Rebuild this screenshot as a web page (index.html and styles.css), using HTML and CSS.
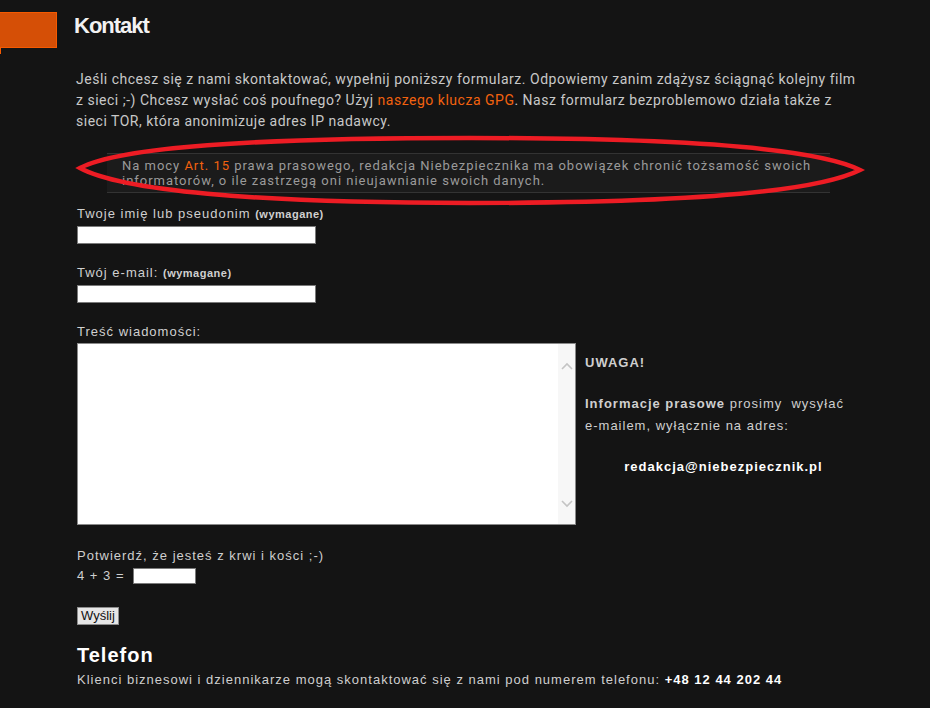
FILE: index.html
```html
<!DOCTYPE html>
<html lang="pl">
<head>
<meta charset="utf-8">
<title>Kontakt</title>
<link rel="stylesheet" href="styles.css">
</head>
<body>
<div class="page">
  <header class="head">
    <div class="tab"><span class="tab-tail"></span></div>
    <h1 class="title">Kontakt</h1>
  </header>

  <div class="content">
    <p class="intro">Jeśli chcesz się z nami skontaktować, wypełnij poniższy formularz. Odpowiemy zanim zdążysz ściągnąć kolejny film z sieci ;-) Chcesz wysłać coś poufnego? Użyj <a href="#" class="link">naszego klucza GPG</a>. Nasz formularz bezproblemowo działa także z sieci TOR, która anonimizuje adres IP nadawcy.</p>

    <div class="callout">Na mocy <a href="#" class="link">Art. 15</a> prawa prasowego, redakcja Niebezpiecznika ma obowiązek chronić tożsamość swoich informatorów, o ile zastrzegą oni nieujawnianie swoich danych.</div>

    <form class="form">
      <label class="label">Twoje imię lub pseudonim <small class="req">(wymagane)</small></label>
      <input class="field" type="text">

      <label class="label gap">Twój e-mail: <small class="req">(wymagane)</small></label>
      <input class="field" type="text">

      <label class="label gap">Treść wiadomości:</label>
      <div class="msg-row">
        <div class="textbox">
          <textarea class="area"></textarea>
          <div class="scroll">
            <svg class="chev" width="12" height="8" viewBox="0 0 12 8"><path d="M1 7 L6 2 L11 7" fill="none" stroke="#c4c4c4" stroke-width="1.6"/></svg>
            <svg class="chev" width="12" height="8" viewBox="0 0 12 8"><path d="M1 1 L6 6 L11 1" fill="none" stroke="#c4c4c4" stroke-width="1.6"/></svg>
          </div>
        </div>
        <aside class="note">
          <p class="note-p"><b>UWAGA!</b></p>
          <p class="note-p"><b>Informacje prasowe</b> prosimy&nbsp; wysyłać e-mailem, wyłącznie na adres:</p>
          <p class="note-p mail">redakcja@niebezpiecznik.pl</p>
        </aside>
      </div>

      <p class="captcha">Potwierdź, że jesteś z krwi i kości ;-)</p>
      <div class="sum"><span>4 + 3 =</span><input class="small-field" type="text"></div>

      <button class="send" type="button">Wyślij</button>
    </form>

    <h2 class="sub">Telefon</h2>
    <p class="phone">Klienci biznesowi i dziennikarze mogą skontaktować się z nami pod numerem telefonu: <b class="num">+48 12 44 202 44</b></p>
  </div>

  <svg class="mark" width="930" height="708" viewBox="0 0 930 708">
    <path d="M80,168 C120,147 250,138 470,138 C700,138 820,150 860,170 C820,190 700,203 470,203 C250,203 120,190 80,168 Z" fill="none" stroke="#ed1c24" stroke-width="4.5"/>
  </svg>
</div>
</body>
</html>
```

FILE: styles.css
```css
html, body {
  margin: 0;
  padding: 0;
  background: #141414;
}

.page {
  position: relative;
  width: 930px;
  height: 708px;
  overflow: hidden;
  font-family: "Liberation Sans", Arial, sans-serif;
  color: #cfcfcf;
}

.head {
  display: flex;
  align-items: flex-start;
  padding-top: 12px;
}

.tab {
  position: relative;
  width: 56px;
  height: 34px;
  background: #d54f06;
  border: 1px solid #f65a00;
  border-left: none;
  flex: none;
}

.tab-tail {
  position: absolute;
  left: 0;
  top: 35px;
  width: 1px;
  height: 6px;
  background: #f65a00;
}

.title {
  margin: 0 0 0 17px;
  padding-top: 3px;
  font-size: 22px;
  line-height: 22px;
  font-weight: bold;
  letter-spacing: -1px;
  color: #f2f2f2;
}

.content {
  padding-left: 76px;
  width: 790px;
}

.intro {
  margin: 21px 0 0;
  font-family: Roboto, "Liberation Sans", sans-serif;
  font-size: 14px;
  line-height: 21px;
  letter-spacing: 0.51px;
  color: #c8c8c8;
}

.link {
  color: #f2620f;
  text-decoration: none;
}

.callout {
  margin: 21px 0 0 31px;
  width: 708px;
  padding: 4px 0 4px 15px;
  background: #1b1b1b;
  border-top: 1px solid #333;
  border-bottom: 1px solid #333;
  font-family: Roboto, "Liberation Sans", sans-serif;
  font-size: 13px;
  line-height: 15px;
  letter-spacing: 0.98px;
  color: #9a9a9a;
}

.form {
  display: flex;
  flex-direction: column;
  align-items: flex-start;
  margin-top: 12px;
  padding-left: 1px;
}

.label {
  font-size: 13px;
  line-height: 18px;
  letter-spacing: 1px;
  color: #d0d0d0;
}

.label.gap {
  margin-top: 20px;
}

.req {
  font-size: 11px;
  font-weight: bold;
  letter-spacing: 0.5px;
}

.field {
  margin: 3px 0 0;
  width: 239px;
  height: 18px;
  box-sizing: border-box;
  border: 1px solid #7a7a7a;
  background: #fff;
  padding: 0;
}

.msg-row {
  display: flex;
  margin-top: 2px;
}

.textbox {
  display: flex;
  width: 499px;
  height: 182px;
  box-sizing: border-box;
  border: 1px solid #8a8a8a;
  background: #fff;
}

.area {
  flex: 1;
  border: none;
  margin: 0;
  padding: 0;
  resize: none;
  background: #fff;
}

.scroll {
  width: 17px;
  background: #f7f7f7;
  display: flex;
  flex-direction: column;
  justify-content: space-between;
  align-items: center;
  padding: 18px 0 16px;
}

.chev {
  display: block;
}

.note {
  margin-left: 9px;
  width: 277px;
  font-size: 13px;
  line-height: 22px;
  letter-spacing: 1px;
  color: #cfcfcf;
}

.note-p {
  margin: 9px 0 19px;
}

.note-p + .note-p {
  margin-top: 0;
}

.mail {
  text-align: center;
  font-weight: bold;
  color: #fff;
  margin-top: 0;
}

.captcha {
  margin: 21px 0 0;
  font-size: 13px;
  line-height: 20px;
  letter-spacing: 1px;
}

.sum {
  display: flex;
  align-items: center;
  font-size: 13px;
  line-height: 20px;
  letter-spacing: 1px;
}

.small-field {
  margin-left: 9px;
  width: 63px;
  height: 16px;
  box-sizing: border-box;
  border: 1px solid #7a7a7a;
  background: #fff;
  padding: 0;
}

.send {
  margin-top: 21px;
  height: 18px;
  padding: 0 3px;
  font-family: "Liberation Sans", Arial, sans-serif;
  font-size: 13px;
  line-height: 14px;
  color: #111;
  background: #e6e6e6;
  border: 1px solid #8c8c8c;
  border-radius: 0;
}

.sub {
  margin: 18px 0 0 1px;
  font-size: 20px;
  line-height: 24px;
  letter-spacing: 1px;
  color: #fff;
}

.phone {
  margin: 3px 0 0 1px;
  font-size: 13px;
  line-height: 20px;
  letter-spacing: 1px;
  color: #cfcfcf;
}

.num {
  color: #fff;
  letter-spacing: 1px;
}

.mark {
  position: absolute;
  left: 0;
  top: 0;
  pointer-events: none;
}
```
